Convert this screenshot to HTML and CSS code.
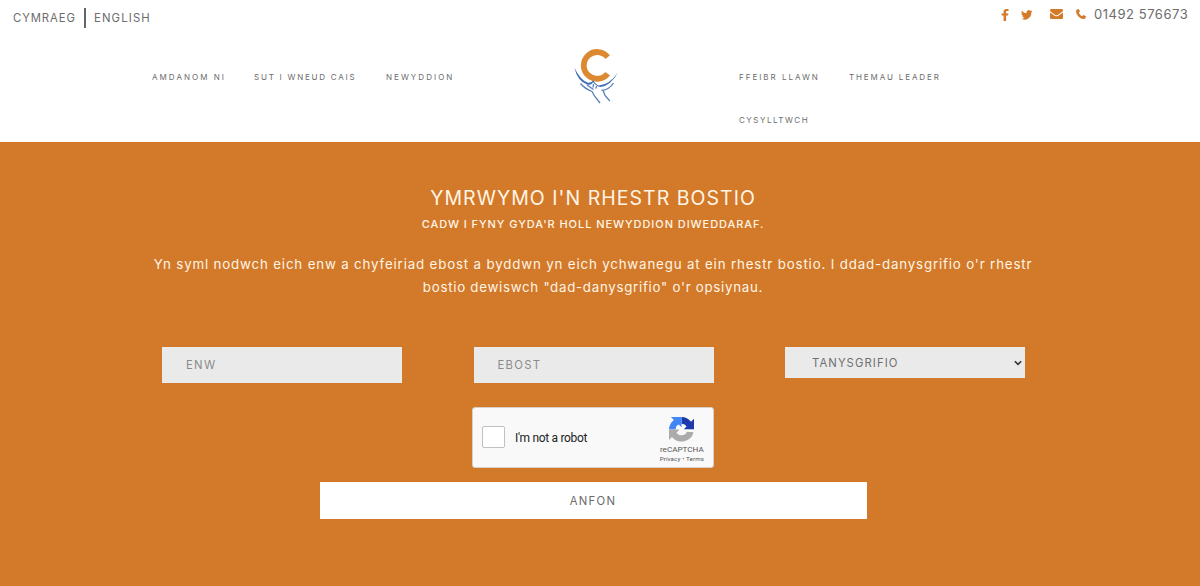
FILE: index.html
```html
<!DOCTYPE html>
<html lang="cy">
<head>
<meta charset="utf-8">
<title>Rhestr bostio</title>
<link rel="stylesheet" href="styles.css">
</head>
<body>
<header class="header">
  <div class="topbar">
    <div class="languages"><a class="lang lang-cy">CYMRAEG</a><a class="lang lang-en">ENGLISH</a></div>
    <div class="contact">
      <svg class="facebook" width="8" height="12" viewBox="0 0 8 12"><path d="M7.500 .1v2H6.200C5.300 2.100 5.100 2.500 5.100 3.100v1.300h2.300L7.100 6.600h-2V12H2.600V6.600h-2V4.400h2V2.800C2.600.9 3.800 0 5.600 0z"/></svg>
      <svg class="twitter" width="11.500" height="10" viewBox="0 0 24 20"><path d="M24 2.400a10 10 0 0 1-2.800.8A5 5 0 0 0 23.300.5a10 10 0 0 1-3.100 1.200A4.900 4.900 0 0 0 11.700 6.200C7.700 6 4.100 4.100 1.700 1.100a4.900 4.900 0 0 0 1.500 6.600 5 5 0 0 1-2.200-.6c0 2.300 1.600 4.400 3.900 4.900a5 5 0 0 1-2.200.1 4.900 4.900 0 0 0 4.600 3.400A9.900 9.900 0 0 1 0 17.500 14 14 0 0 0 21.500 5z"/></svg>
      <svg class="mail" width="13" height="10" viewBox="0 0 13 10"><path d="M1.200 0h10.600Q13 0 13 1.200 13 2.200 11.800 3.100L7.700 5.900Q6.500 6.700 5.300 5.900L1.200 3.100Q0 2.200 0 1.200 0 0 1.200 0zM0 3.500l5 3.400q1.500.9 3 0l5-3.400v5.300Q13 10 11.800 10H1.200Q0 10 0 8.800z"/></svg>
      <svg class="phone" width="10" height="10" viewBox="0 0 10 10"><path d="M2.200.1q.5-.2.700.3l.9 1.800q.2.500-.2.800l-.9.800q1 2.300 3.500 3.500l.8-.9q.4-.5.900-.2l1.800.9q.4.300.3.700Q9.500 10 7.700 10 4.900 9.900 2.400 7.400.1 5 0 2.300 0 .6 2.200.1z"/></svg>
      <span class="number">01492 576673</span>
    </div>
  </div>
  <div class="navbar">
    <nav class="nav nav-left"><a class="n1">AMDANOM NI</a><a class="n2">SUT I WNEUD CAIS</a><a class="n3">NEWYDDION</a></nav>
    <svg class="logo" width="46" height="58" viewBox="0 0 46 58">
      <path class="logo-c" d="M33.700 8.100A13.400 13.400 0 1 0 33.700 24.700"/>
      <path class="logo-hill" d="M.3 18.500Q6.500 31.500 14 33.800 17.200 34.300 19.300 31.200 21.500 35.800 25 36.500 35.500 36 44 23.300 37 36.700 26.500 38 22.500 37.500 19.300 33.200 17 36.600 13 35.500 3.500 32 .3 18.500z"/>
      <path class="logo-line" d="M6.500 34.500Q10.500 39.500 18 42.500L20.500 47 26 54M13 36L19.500 40.500M23 37L21.500 39.500M29 41L31 46.500 35.800 52M27.500 41.500Q35.500 40.500 39.500 34M19.500 35L19 38.500"/>
    </svg>
    <nav class="nav nav-right"><a class="n4">FFEIBR LLAWN</a><a class="n5">THEMAU LEADER</a><a class="n6">CYSYLLTWCH</a></nav>
  </div>
</header>
<main class="signup">
  <h1 class="title">YMRWYMO I'N RHESTR BOSTIO</h1>
  <h2 class="subtitle">CADW I FYNY GYDA'R HOLL NEWYDDION DIWEDDARAF.</h2>
  <p class="intro"><span class="i1">Yn syml nodwch eich enw a chyfeiriad ebost a byddwn yn eich ychwanegu at ein rhestr bostio. I ddad-danysgrifio o'r rhestr</span><br><span class="i2">bostio dewiswch "dad-danysgrifio" o'r opsiynau.</span></p>
  <form class="form">
    <div class="fields">
      <input class="field" placeholder="ENW" aria-label="Enw">
      <input class="field" placeholder="EBOST" aria-label="Ebost">
      <div class="select"><span>TANYSGRIFIO</span><svg width="8" height="6" viewBox="0 0 8 6"><path d="M.8 1.200L4 4.400 7.200 1.200"/></svg></div>
    </div>
    <div class="captcha">
      <span class="checkbox"></span>
      <span class="robot">I'm not a robot</span>
      <div class="brand">
        <svg width="25" height="25" viewBox="0 0 64 64">
          <path fill="#1c3aa9" d="M64 32V4.500l-7.600 7.600A32 32 0 0 0 32 0v18l1-1q8 0 12 7l-7 7.500h26z"/>
          <path fill="#4285f4" d="M32 0H5l7.500 7.600A32 32 0 0 0 0 32h17q0-10 8-13l7 7z"/>
          <path fill="#ababab" d="M0 32v27l7.600-7.600A32 32 0 0 0 63 39L46 38q-4 9-14 9-8 0-13-7l8-8z"/>
        </svg>
        <span class="recaptcha">reCAPTCHA</span>
        <span class="terms">Privacy&nbsp;•&nbsp;Terms</span>
      </div>
    </div>
    <button class="send" type="button">ANFON</button>
  </form>
</main>
</body>
</html>
```
FILE: styles.css
```css
* { box-sizing: border-box; }
body { margin: 0; width: 1200px; height: 586px; overflow: hidden; background: #fff; color: #6c6c6c; font-family: Inter, "Open Sans", sans-serif; white-space: nowrap; }
h1, h2, p { margin: 0; font-weight: 400; }
.header { height: 142px; }
.topbar { display: flex; justify-content: space-between; height: 36px; padding-left: 13px; }
.languages { display: flex; padding-top: 8px; }
.lang { font-size: 11.3px; line-height: 20px; height: 20px; letter-spacing: .9px; }
.lang-cy { width: 73px; border-right: 2px solid #666; }
.lang-en { width: 70px; padding-left: 8px; letter-spacing: 1.15px; }
.contact { display: flex; align-items: flex-start; width: 199px; fill: #d3792a; }
.facebook { margin-top: 9px; }
.twitter { margin: 10px 0 0 12px; }
.mail { margin: 9px 0 0 17.500px; }
.phone { margin: 8.500px 0 0 13px; }
.number { margin-left: 8px; font-size: 13px; line-height: 20px; padding-top: 4px; letter-spacing: .53px; }
.navbar { display: flex; height: 106px; padding: 13px 0 0 152px; }
.nav { display: flex; flex-wrap: wrap; align-content: flex-start; padding-top: 18px; font-size: 8px; line-height: 20px; }
.nav a { height: 43px; }
.nav-left { width: 422px; }
.nav-right { width: 240px; margin-left: 119px; }
.n1 { width: 102px; letter-spacing: 2.050px; }
.n2 { width: 132px; letter-spacing: 1.770px; }
.n3 { width: 80px; letter-spacing: 2.050px; }
.n4 { width: 110px; letter-spacing: 1.980px; }
.n5 { width: 110px; letter-spacing: 1.880px; }
.n6 { width: 110px; letter-spacing: 1.520px; }
.logo { fill: none; }
.logo-c { stroke: #dc8a31; stroke-width: 5.800; }
.logo-hill { fill: #3e6db3; }
.logo-line { stroke: #587fbc; stroke-width: 1.300; }
.signup { height: 444px; padding: 44px 14px 0 0; background: #d3792a; color: #fff5e5; text-align: center; }
.title { font-size: 19.500px; line-height: 24px; letter-spacing: 1.030px; }
.subtitle { margin-top: 4px; font-size: 11px; line-height: 20px; letter-spacing: .940px; font-weight: 500; }
.intro { margin-top: 19px; font-size: 13.300px; line-height: 23px; letter-spacing: .840px; }
.i2 { letter-spacing: .720px; }
.form { display: flex; flex-direction: column; align-items: center; padding-top: 48px; }
.fields { display: flex; justify-content: space-between; align-items: flex-start; width: 863px; margin-left: 1px; height: 60px; }
.field { width: 240px; height: 36px; padding: 0 24px; border: 0; background: #eaeaea; font: 11.300px Inter, sans-serif; letter-spacing: 1.300px; color: #666; }
.field::placeholder { color: #8b8b8b; }
.select { display: flex; align-items: center; justify-content: space-between; width: 240px; height: 31px; padding: 0 3px 0 27px; background: #eaeaea; color: #707070; font-size: 11.300px; letter-spacing: 1.080px; }
.select svg { fill: none; stroke: #333; stroke-width: 1.600; }
.captcha { display: flex; width: 242px; height: 61px; padding: 0 9px 0 9px; background: #f9f9f9; border: 1px solid #d8d0c8; border-radius: 3px; color: #333; font-family: Roboto, sans-serif; }
.checkbox { width: 23px; height: 22px; margin-top: 18px; border: 1.500px solid #c1c1c1; border-radius: 2px; background: #fff; }
.robot { margin: 20px 0 0 10px; font-size: 12px; line-height: 20px; letter-spacing: -.320px; color: #222; }
.brand { display: flex; flex-direction: column; align-items: center; margin-left: auto; color: #555; }
.brand svg { margin-top: 9px; }
.recaptcha { font-size: 8.100px; line-height: 12px; margin-top: 1px; }
.terms { font-size: 6.200px; line-height: 9px; letter-spacing: .12px; }
.send { width: 547px; height: 37px; margin-top: 14px; border: 0; background: #fff; color: #6c6c6c; font: 11.300px Inter, sans-serif; letter-spacing: 1.300px; }
```
